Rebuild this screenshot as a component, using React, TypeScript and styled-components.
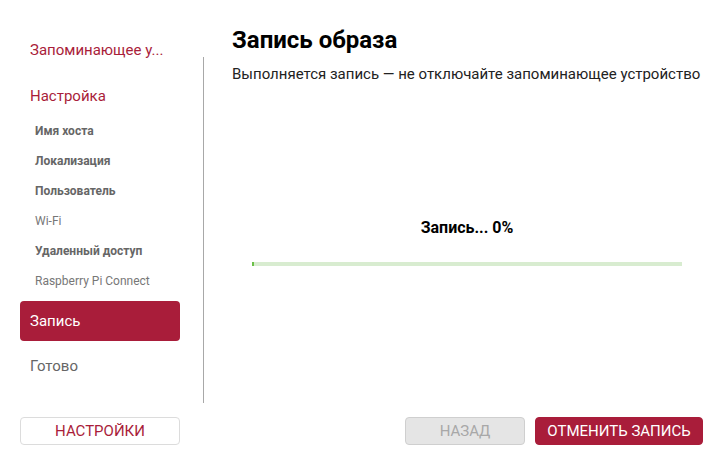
import React from "react";
import styled, { createGlobalStyle } from "styled-components";

const Global = createGlobalStyle`
  html, body { margin: 0; padding: 0; background: #fff; }
  body { font-family: Roboto, "Noto Sans", sans-serif; }
  * { box-sizing: border-box; }
`;

const RED = "#a91d3a";

const Page = styled.div`
  width: 727px;
  height: 461px;
  display: flex;
  flex-direction: column;
  background: #fff;
`;

const Body = styled.div`
  display: flex;
  flex: 1;
  min-height: 0;
`;

const Sidebar = styled.nav`
  width: 203px;
  flex-shrink: 0;
  padding: 40px 0 0 20px;
  display: flex;
  flex-direction: column;
`;

const Divider = styled.div`
  width: 1px;
  flex-shrink: 0;
  margin-top: 57px;
  background: #a8a8a8;
`;

const StepItem = styled.div<{ $state: "done" | "active" | "current" | "todo"; $gap: number }>`
  flex-shrink: 0;
  width: 160px;
  margin-top: ${(p) => p.$gap}px;
  height: ${(p) => (p.$state === "current" ? "40px" : "20px")};
  display: flex;
  align-items: center;
  padding-left: 10px;
  font-size: 15px;
  border-radius: 4px;
  color: ${(p) =>
    p.$state === "current" ? "#fff" : p.$state === "todo" ? "#666" : RED};
  background: ${(p) => (p.$state === "current" ? RED : "transparent")};
  white-space: nowrap;
`;

const SubList = styled.div`
  margin-top: 10px;
  display: flex;
  flex-direction: column;
`;

const SubItem = styled.div<{ $bold?: boolean }>`
  flex-shrink: 0;
  padding-left: 15px;
  font-size: 12px;
  font-weight: ${(p) => (p.$bold ? 700 : 400)};
  color: ${(p) => (p.$bold ? "#666" : "#777")};
  height: 30px;
  display: flex;
  align-items: center;
`;

const Main = styled.main`
  flex: 1;
  padding: 26px 0 0 28px;
  display: flex;
  flex-direction: column;
`;

const Title = styled.h1`
  margin: 0;
  font-size: 24px;
  font-weight: 700;
  color: #000;
  line-height: 28px;
`;

const Subtitle = styled.p`
  margin: 11px 0 0;
  font-size: 15px;
  color: #222;
  line-height: 18px;
  white-space: nowrap;
`;

const ProgressArea = styled.div`
  margin: 135px 0 0 20px;
  width: 430px;
  display: flex;
  flex-direction: column;
  align-items: center;
`;

const ProgressLabel = styled.div`
  font-size: 16px;
  font-weight: 700;
  color: #000;
  line-height: 20px;
`;

const Track = styled.div`
  margin-top: 24px;
  width: 430px;
  height: 4px;
  background: #d8ecd0;
  position: relative;
`;

const Fill = styled.div`
  position: absolute;
  left: 0;
  top: 0;
  bottom: 0;
  background: #6cc04a;
`;

const Footer = styled.footer`
  flex-shrink: 0;
  display: flex;
  align-items: center;
  padding: 14px 24px 16px 20px;
  gap: 10px;
`;

const Spacer = styled.div`
  flex: 1;
`;

const Button = styled.button<{ $variant: "outline" | "disabled" | "primary"; $w: number }>`
  width: ${(p) => p.$w}px;
  height: 28px;
  border-radius: 4px;
  font-family: Roboto, "Noto Sans", sans-serif;
  font-size: 15px;
  text-transform: uppercase;
  cursor: pointer;
  padding: 0;
  border: 1px solid
    ${(p) => (p.$variant === "outline" ? "#dcdcdc" : p.$variant === "disabled" ? "#cfcfcf" : RED)};
  background: ${(p) =>
    p.$variant === "outline" ? "#fff" : p.$variant === "disabled" ? "#e5e5e5" : RED};
  color: ${(p) =>
    p.$variant === "outline" ? RED : p.$variant === "disabled" ? "#a8a8a8" : "#fff"};
`;

const subItems: { label: string; bold: boolean }[] = [
  { label: "Имя хоста", bold: true },
  { label: "Локализация", bold: true },
  { label: "Пользователь", bold: true },
  { label: "Wi-Fi", bold: false },
  { label: "Удаленный доступ", bold: true },
  { label: "Raspberry Pi Connect", bold: false },
];

export default function App() {
  const progressPx = 2;
  return (
    <Page>
      <Global />
      <Body>
        <Sidebar>
          <StepItem $state="done" $gap={0}>Запоминающее у...</StepItem>
          <StepItem $state="active" $gap={26}>Настройка</StepItem>
          <SubList>
            {subItems.map((s) => (
              <SubItem key={s.label} $bold={s.bold}>{s.label}</SubItem>
            ))}
          </SubList>
          <StepItem $state="current" $gap={5}>Запись</StepItem>
          <StepItem $state="todo" $gap={15}>Готово</StepItem>
        </Sidebar>
        <Divider />
        <Main>
          <Title>Запись образа</Title>
          <Subtitle>Выполняется запись — не отключайте запоминающее устройство</Subtitle>
          <ProgressArea>
            <ProgressLabel>Запись... 0%</ProgressLabel>
            <Track>
              <Fill style={{ width: `${progressPx}px` }} />
            </Track>
          </ProgressArea>
        </Main>
      </Body>
      <Footer>
        <Button $variant="outline" $w={160}>Настройки</Button>
        <Spacer />
        <Button $variant="disabled" $w={120}>Назад</Button>
        <Button $variant="primary" $w={168}>Отменить запись</Button>
      </Footer>
    </Page>
  );
}
